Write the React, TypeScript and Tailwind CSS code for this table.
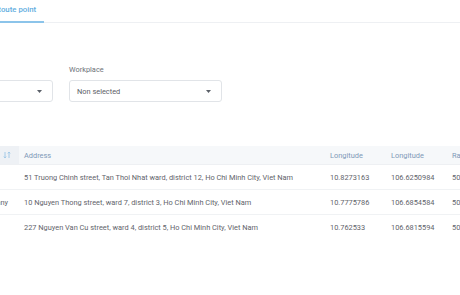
const rows = [
  {
    name: "",
    address:
      "51 Truong Chinh street, Tan Thoi Nhat ward, district 12, Ho Chi Minh City, Viet Nam",
    lat: "10.8273163",
    lng: "106.6250984",
    radius: "500",
  },
  {
    name: "Company",
    address: "10 Nguyen Thong street, ward 7, district 3, Ho Chi Minh City, Viet Nam",
    lat: "10.7775786",
    lng: "106.6854584",
    radius: "500",
  },
  {
    name: "",
    address: "227 Nguyen Van Cu street, ward 4, district 5, Ho Chi Minh City, Viet Nam",
    lat: "10.762533",
    lng: "106.6815594",
    radius: "500",
  },
];

function SortIcon() {
  return (
    <svg className="w-[8px] h-[8px] text-[#9cc6e6]" viewBox="0 0 8 8" fill="none" aria-hidden="true">
      <path d="M2 1v6M0.8 5.6L2 7l1.2-1.4" stroke="currentColor" strokeWidth={0.9} />
      <path d="M6 7V1M4.8 2.4L6 1l1.2 1.4" stroke="currentColor" strokeWidth={0.9} />
    </svg>
  );
}

function Select({ value }: { value: string }) {
  return (
    <div className="w-[153px] h-[22px] flex items-center justify-between px-[7px] border border-[#e1e4e8] rounded-[3px] bg-white">
      <span className="text-[#5c6168]">{value}</span>
      <svg className="w-[5px] h-[3px] mr-[3px]" viewBox="0 0 5 3" aria-hidden="true">
        <path d="M0 0h5L2.5 3z" fill="#5b6068" />
      </svg>
    </div>
  );
}

export default function App() {
  return (
    <div
      className="w-[460px] h-[295px] overflow-hidden bg-white text-[7.4px] text-[#5f646b]"
      style={{ fontFamily: "Roboto, 'Noto Sans', sans-serif" }}
    >
      <div className="-ml-[100px] w-[660px]">
        {/* Tabs */}
        <div className="h-[23px] flex items-end border-b border-[#eef0f3]">
          <div className="ml-[88px] px-[8px] h-[23px] flex items-center pb-[2px] border-b-2 border-[#8cc4ea] -mb-px text-[#62ade0] text-[7.8px] font-medium">
            Route point
          </div>
        </div>

        {/* Filters */}
        <div className="flex gap-[16px] mt-[41px]">
          <div className="flex flex-col gap-[5px]">
            <span className="text-[#6d7278]">Place type</span>
            <Select value="" />
          </div>
          <div className="flex flex-col gap-[5px]">
            <span className="text-[#6d7278]">Workplace</span>
            <Select value="Non selected" />
          </div>
        </div>

        {/* Table */}
        <div className="mt-[44px]">
          <div className="flex h-[19px] items-center bg-[#f6f8fa] text-[#7e98b8] border-b border-[#eef0f3]">
            <div className="w-[119px] h-full flex items-center justify-end pr-[8px] bg-[#eef1f5]">
              <SortIcon />
            </div>
            <div className="w-[306px] pl-[5px]">Address</div>
            <div className="w-[61px] pl-[5px]">Longitude</div>
            <div className="w-[61px] pl-[5px]">Longitude</div>
            <div className="flex-1 pl-[5px]">Radius</div>
          </div>
          {rows.map((r, i) => (
            <div
              key={i}
              className={`flex h-[25px] items-center ${i < rows.length - 1 ? "border-b border-[#f0f2f4]" : ""}`}
            >
              <div className="w-[119px] text-right pr-[11px]">{r.name}</div>
              <div className="w-[306px] pl-[5px] whitespace-nowrap">{r.address}</div>
              <div className="w-[61px] pl-[5px]">{r.lat}</div>
              <div className="w-[61px] pl-[5px]">{r.lng}</div>
              <div className="flex-1 pl-[5px]">{r.radius}</div>
            </div>
          ))}
        </div>
      </div>
    </div>
  );
}
